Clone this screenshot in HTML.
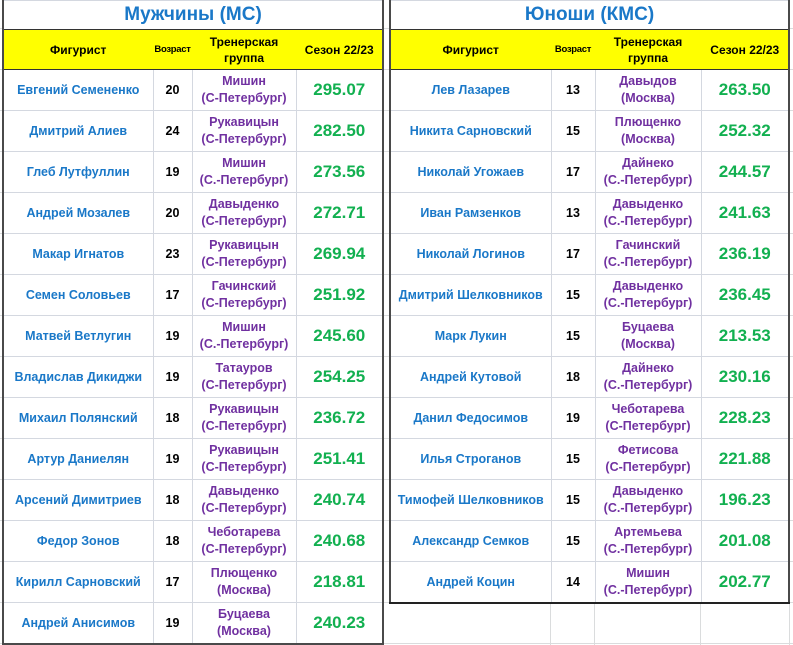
<!DOCTYPE html>
<html><head><meta charset="utf-8"><style>
body{margin:0;width:793px;height:645px;overflow:hidden;background:#fff;position:relative;font-family:"Liberation Sans",sans-serif;font-weight:bold;
background-image:linear-gradient(#dadcdd 1px,transparent 1px);background-size:100% 41px;background-position:0 28px;}
.vl{position:absolute;top:0;bottom:0;width:1px;background:#dadcdd}
table{position:absolute;top:0;border-collapse:collapse;table-layout:fixed;background:#fff;border:2px solid #4a4a4a;border-top:none}
td{border:1px solid #d4d8e0;text-align:center;padding:0;height:40px;overflow:hidden;white-space:nowrap}
tr.t td{height:28px;font-size:19px;color:#1a78c8;border-bottom:1px solid #333}
tr.h td{height:39px;background:#ffff00;font-size:12px;color:#000;border-left-color:#ffff00;border-right-color:#ffff00;border-bottom:1px solid #333;line-height:16px}
tr.h td.a{font-size:9.5px;letter-spacing:-0.3px}
.n{color:#1a78c8;font-size:12.5px}
.ag{font-size:12.5px;color:#000}
.p{color:#7030a0;font-size:12.5px;line-height:17px}
.s{color:#12b050;font-size:17px}
</style></head><body>
<div class="vl" style="left:550px"></div><div class="vl" style="left:594px"></div><div class="vl" style="left:700px"></div><div class="vl" style="left:789px"></div>
<table style="left:2px;width:382px">
<colgroup><col style="width:150px"><col style="width:39px"><col style="width:104px"><col style="width:87px"></colgroup>
<tr class="t"><td colspan="4">Мужчины (МС)</td></tr>
<tr class="h"><td>Фигурист</td><td class="a">Возраст</td><td>Тренерская<br>группа</td><td>Сезон 22/23</td></tr>
<tr><td class="n">Евгений Семененко</td><td class="ag">20</td><td class="p">Мишин<br>(С-Петербург)</td><td class="s">295.07</td></tr>
<tr><td class="n">Дмитрий Алиев</td><td class="ag">24</td><td class="p">Рукавицын<br>(С-Петербург)</td><td class="s">282.50</td></tr>
<tr><td class="n">Глеб Лутфуллин</td><td class="ag">19</td><td class="p">Мишин<br>(С.-Петербург)</td><td class="s">273.56</td></tr>
<tr><td class="n">Андрей Мозалев</td><td class="ag">20</td><td class="p">Давыденко<br>(С-Петербург)</td><td class="s">272.71</td></tr>
<tr><td class="n">Макар Игнатов</td><td class="ag">23</td><td class="p">Рукавицын<br>(С-Петербург)</td><td class="s">269.94</td></tr>
<tr><td class="n">Семен Соловьев</td><td class="ag">17</td><td class="p">Гачинский<br>(С-Петербург)</td><td class="s">251.92</td></tr>
<tr><td class="n">Матвей Ветлугин</td><td class="ag">19</td><td class="p">Мишин<br>(С.-Петербург)</td><td class="s">245.60</td></tr>
<tr><td class="n">Владислав Дикиджи</td><td class="ag">19</td><td class="p">Татауров<br>(С-Петербург)</td><td class="s">254.25</td></tr>
<tr><td class="n">Михаил Полянский</td><td class="ag">18</td><td class="p">Рукавицын<br>(С-Петербург)</td><td class="s">236.72</td></tr>
<tr><td class="n">Артур Даниелян</td><td class="ag">19</td><td class="p">Рукавицын<br>(С-Петербург)</td><td class="s">251.41</td></tr>
<tr><td class="n">Арсений Димитриев</td><td class="ag">18</td><td class="p">Давыденко<br>(С-Петербург)</td><td class="s">240.74</td></tr>
<tr><td class="n">Федор Зонов</td><td class="ag">18</td><td class="p">Чеботарева<br>(С-Петербург)</td><td class="s">240.68</td></tr>
<tr><td class="n">Кирилл Сарновский</td><td class="ag">17</td><td class="p">Плющенко<br>(Москва)</td><td class="s">218.81</td></tr>
<tr><td class="n">Андрей Анисимов</td><td class="ag">19</td><td class="p">Буцаева<br>(Москва)</td><td class="s">240.23</td></tr>
</table>
<table style="left:389px;width:401px;border-bottom:2px solid #222">
<colgroup><col style="width:161px"><col style="width:44px"><col style="width:106px"><col style="width:88px"></colgroup>
<tr class="t"><td colspan="4">Юноши (КМС)</td></tr>
<tr class="h"><td>Фигурист</td><td class="a">Возраст</td><td>Тренерская<br>группа</td><td>Сезон 22/23</td></tr>
<tr><td class="n">Лев Лазарев</td><td class="ag">13</td><td class="p">Давыдов<br>(Москва)</td><td class="s">263.50</td></tr>
<tr><td class="n">Никита Сарновский</td><td class="ag">15</td><td class="p">Плющенко<br>(Москва)</td><td class="s">252.32</td></tr>
<tr><td class="n">Николай Угожаев</td><td class="ag">17</td><td class="p">Дайнеко<br>(С.-Петербург)</td><td class="s">244.57</td></tr>
<tr><td class="n">Иван Рамзенков</td><td class="ag">13</td><td class="p">Давыденко<br>(С.-Петербург)</td><td class="s">241.63</td></tr>
<tr><td class="n">Николай Логинов</td><td class="ag">17</td><td class="p">Гачинский<br>(С.-Петербург)</td><td class="s">236.19</td></tr>
<tr><td class="n">Дмитрий Шелковников</td><td class="ag">15</td><td class="p">Давыденко<br>(С.-Петербург)</td><td class="s">236.45</td></tr>
<tr><td class="n">Марк Лукин</td><td class="ag">15</td><td class="p">Буцаева<br>(Москва)</td><td class="s">213.53</td></tr>
<tr><td class="n">Андрей Кутовой</td><td class="ag">18</td><td class="p">Дайнеко<br>(С.-Петербург)</td><td class="s">230.16</td></tr>
<tr><td class="n">Данил Федосимов</td><td class="ag">19</td><td class="p">Чеботарева<br>(С-Петербург)</td><td class="s">228.23</td></tr>
<tr><td class="n">Илья Строганов</td><td class="ag">15</td><td class="p">Фетисова<br>(С-Петербург)</td><td class="s">221.88</td></tr>
<tr><td class="n">Тимофей Шелковников</td><td class="ag">15</td><td class="p">Давыденко<br>(С.-Петербург)</td><td class="s">196.23</td></tr>
<tr><td class="n">Александр Семков</td><td class="ag">15</td><td class="p">Артемьева<br>(С.-Петербург)</td><td class="s">201.08</td></tr>
<tr><td class="n">Андрей Коцин</td><td class="ag">14</td><td class="p">Мишин<br>(С.-Петербург)</td><td class="s">202.77</td></tr>
</table>
</body></html>
